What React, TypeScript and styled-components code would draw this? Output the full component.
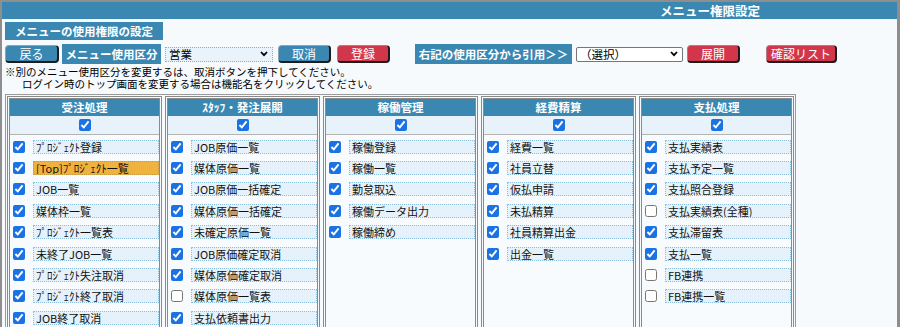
import React from 'react';
import styled, { createGlobalStyle } from 'styled-components';

const Global = createGlobalStyle`
  html, body { margin: 0; padding: 0; overflow: hidden; background: #ffffff; }
  body { font-family: "Noto Sans CJK JP", "Noto Sans", sans-serif; }
  * { box-sizing: border-box; }
`;

const Frame = styled.div`
  width: 900px;
  height: 327px;
  border-top: 2px solid #8e8e8e;
  border-left: 2px solid #8e8e8e;
  border-right: 3px solid #8e8e8e;
  background: #f6fafd;
  overflow: hidden;
`;

const TitleBar = styled.div`
  height: 17px;
  background: #3a88b2;
  color: #fff;
  font-weight: bold;
  font-size: 12.5px;
  line-height: 17px;
  display: flex;
  justify-content: flex-end;
  padding-right: 137px;
`;

const Content = styled.div`
  padding: 3px 0 0 3px;
`;

const SectionLabel = styled.div`
  width: 158px;
  height: 18px;
  background: #3a88b2;
  color: #fff;
  font-weight: bold;
  font-size: 11.5px;
  line-height: 18px;
  text-align: center;
  white-space: nowrap;
`;

const Toolbar = styled.div`
  margin-top: 4px;
  height: 20px;
  display: flex;
  align-items: center;
`;

const ToolLabel = styled.div<{ $w: number; $ml: number }>`
  width: ${p => p.$w}px;
  margin-left: ${p => p.$ml}px;
  height: 20px;
  background: #3a88b2;
  color: #fff;
  font-weight: bold;
  font-size: 11.5px;
  line-height: 20px;
  text-align: center;
  white-space: nowrap;
  overflow: hidden;
`;

const Btn = styled.button<{ $tone: 'blue' | 'red'; $w: number; $ml: number }>`
  width: ${p => p.$w}px;
  margin-left: ${p => p.$ml}px;
  height: 18px;
  padding: 0;
  font-family: "Noto Sans CJK JP", sans-serif;
  font-size: 12px;
  line-height: 14px;
  color: #fff;
  background: ${p => (p.$tone === 'red' ? '#d2364b' : '#3a87b1')};
  border: 1px solid ${p => (p.$tone === 'red' ? '#b57a82' : '#8aa6b6')};
  border-right: 2px solid #1c1c1c;
  border-bottom: 2px solid #1c1c1c;
  border-radius: 4px;
  white-space: nowrap;
`;

const SelectBox = styled.div<{ $w: number; $ml: number; $variant: 'dotted' | 'plain' }>`
  width: ${p => p.$w}px;
  margin-left: ${p => p.$ml}px;
  height: 15px;
  display: flex;
  align-items: center;
  justify-content: space-between;
  padding: 0 4px 0 3px;
  font-size: 11.5px;
  line-height: 13px;
  color: #000;
  background: ${p => (p.$variant === 'dotted' ? '#e8f3fb' : '#ffffff')};
  border: ${p => (p.$variant === 'dotted' ? '1px dotted #7fb3d5' : '1px solid #767676')};
  border-radius: ${p => (p.$variant === 'dotted' ? '0' : '2px')};
  white-space: nowrap;
  cursor: default;
`;

const Notice = styled.p`
  margin: 2px 0 0;
  padding-left: 17px;
  text-indent: -17px;
  font-size: 10.5px;
  line-height: 12px;
  color: #000;
  white-space: pre-line;
`;

const Board = styled.div`
  margin-top: 4px;
  width: 791px;
  height: 260px;
  border: 1px solid #9a9a9a;
  padding: 1px;
  display: grid;
  grid-template-columns: repeat(5, 155px);
  column-gap: 3px;
`;

const Column = styled.div`
  border: 3px double #8a8a8a;
  background: #f8fbfd;
  display: flex;
  flex-direction: column;
`;

const ColHeader = styled.div`
  height: 17px;
  background: #3a88b2;
  color: #fff;
  font-weight: bold;
  font-size: 11.5px;
  line-height: 17px;
  text-align: center;
  white-space: nowrap;
`;

const CheckRow = styled.div`
  height: 19px;
  background: #e7f2fb;
  border-bottom: 1px solid #b4b4b4;
  display: flex;
  align-items: center;
  justify-content: center;
`;

const Check = styled.input`
  width: 12px;
  height: 12px;
  margin: 0;
  accent-color: #1b72e3;
  flex: none;
`;

const ItemList = styled.div`
  padding-top: 1px;
  display: flex;
  flex-direction: column;
`;

const ItemRow = styled.div`
  height: 21.4px;
  display: flex;
  align-items: center;
  padding-left: 3px;
`;

const ItemName = styled.span<{ $top?: boolean }>`
  margin-left: 8px;
  flex: 1;
  height: 14px;
  border: 1px dotted ${p => (p.$top ? '#c99a3a' : '#8ebfdc')};
  background: ${p => (p.$top ? '#f0b23e' : '#e6f2fb')};
  font-size: 11px;
  line-height: 12px;
  padding-left: 2px;
  color: #111;
  white-space: nowrap;
  overflow: hidden;
  cursor: pointer;
`;

type Item = { name: string; checked: boolean; top?: boolean };
type Group = { title: string; items: Item[] };

const groups: Group[] = [
  {
    title: '受注処理',
    items: [
      { name: 'ﾌﾟﾛｼﾞｪｸﾄ登録', checked: true },
      { name: '[Top]ﾌﾟﾛｼﾞｪｸﾄ一覧', checked: true, top: true },
      { name: 'JOB一覧', checked: true },
      { name: '媒体枠一覧', checked: true },
      { name: 'ﾌﾟﾛｼﾞｪｸﾄ一覧表', checked: true },
      { name: '未終了JOB一覧', checked: true },
      { name: 'ﾌﾟﾛｼﾞｪｸﾄ失注取消', checked: true },
      { name: 'ﾌﾟﾛｼﾞｪｸﾄ終了取消', checked: true },
      { name: 'JOB終了取消', checked: true },
    ],
  },
  {
    title: 'ｽﾀｯﾌ・発注展開',
    items: [
      { name: 'JOB原価一覧', checked: true },
      { name: '媒体原価一覧', checked: true },
      { name: 'JOB原価一括確定', checked: true },
      { name: '媒体原価一括確定', checked: true },
      { name: '未確定原価一覧', checked: true },
      { name: 'JOB原価確定取消', checked: true },
      { name: '媒体原価確定取消', checked: true },
      { name: '媒体原価一覧表', checked: false },
      { name: '支払依頼書出力', checked: true },
    ],
  },
  {
    title: '稼働管理',
    items: [
      { name: '稼働登録', checked: true },
      { name: '稼働一覧', checked: true },
      { name: '勤怠取込', checked: true },
      { name: '稼働データ出力', checked: true },
      { name: '稼働締め', checked: true },
    ],
  },
  {
    title: '経費精算',
    items: [
      { name: '経費一覧', checked: true },
      { name: '社員立替', checked: true },
      { name: '仮払申請', checked: true },
      { name: '未払精算', checked: true },
      { name: '社員精算出金', checked: true },
      { name: '出金一覧', checked: true },
    ],
  },
  {
    title: '支払処理',
    items: [
      { name: '支払実績表', checked: true },
      { name: '支払予定一覧', checked: true },
      { name: '支払照合登録', checked: true },
      { name: '支払実績表(全種)', checked: false },
      { name: '支払滞留表', checked: true },
      { name: '支払一覧', checked: true },
      { name: 'FB連携', checked: false },
      { name: 'FB連携一覧', checked: false },
    ],
  },
];

const noticeText =
  '※別のメニュー使用区分を変更するは、取消ボタンを押下してください。\nログイン時のトップ画面を変更する場合は機能名をクリックしてください。';

const ChevronIcon = () => (
  <svg width="8" height="6" viewBox="0 0 8 6">
    <path d="M1 1 L4 4.2 L7 1" fill="none" stroke="#000" strokeWidth="1.8" />
  </svg>
);

export default function App() {
  return (
    <>
      <Global />
      <Frame>
        <TitleBar>メニュー権限設定</TitleBar>
        <Content>
          <SectionLabel>メニューの使用権限の設定</SectionLabel>
          <Toolbar>
            <Btn $tone="blue" $w={54} $ml={0}>戻る</Btn>
            <ToolLabel $w={99} $ml={3}>メニュー使用区分</ToolLabel>
            <SelectBox role="combobox" $variant="dotted" $w={108} $ml={4}>
              <span>営業</span>
              <ChevronIcon />
            </SelectBox>
            <Btn $tone="blue" $w={53} $ml={5}>取消</Btn>
            <Btn $tone="red" $w={53} $ml={6}>登録</Btn>
            <ToolLabel $w={157} $ml={25}>右記の使用区分から引用＞＞</ToolLabel>
            <SelectBox role="combobox" $variant="plain" $w={107} $ml={4}>
              <span>（選択）</span>
              <ChevronIcon />
            </SelectBox>
            <Btn $tone="red" $w={53} $ml={4}>展開</Btn>
            <Btn $tone="red" $w={71} $ml={26}>確認リスト</Btn>
          </Toolbar>
          <Notice>{noticeText}</Notice>
          <Board>
            {groups.map(g => (
              <Column key={g.title}>
                <ColHeader>{g.title}</ColHeader>
                <CheckRow>
                  <Check type="checkbox" defaultChecked />
                </CheckRow>
                <ItemList>
                  {g.items.map(it => (
                    <ItemRow key={it.name}>
                      <Check type="checkbox" defaultChecked={it.checked} />
                      <ItemName $top={it.top}>{it.name}</ItemName>
                    </ItemRow>
                  ))}
                </ItemList>
              </Column>
            ))}
          </Board>
        </Content>
      </Frame>
    </>
  );
}
